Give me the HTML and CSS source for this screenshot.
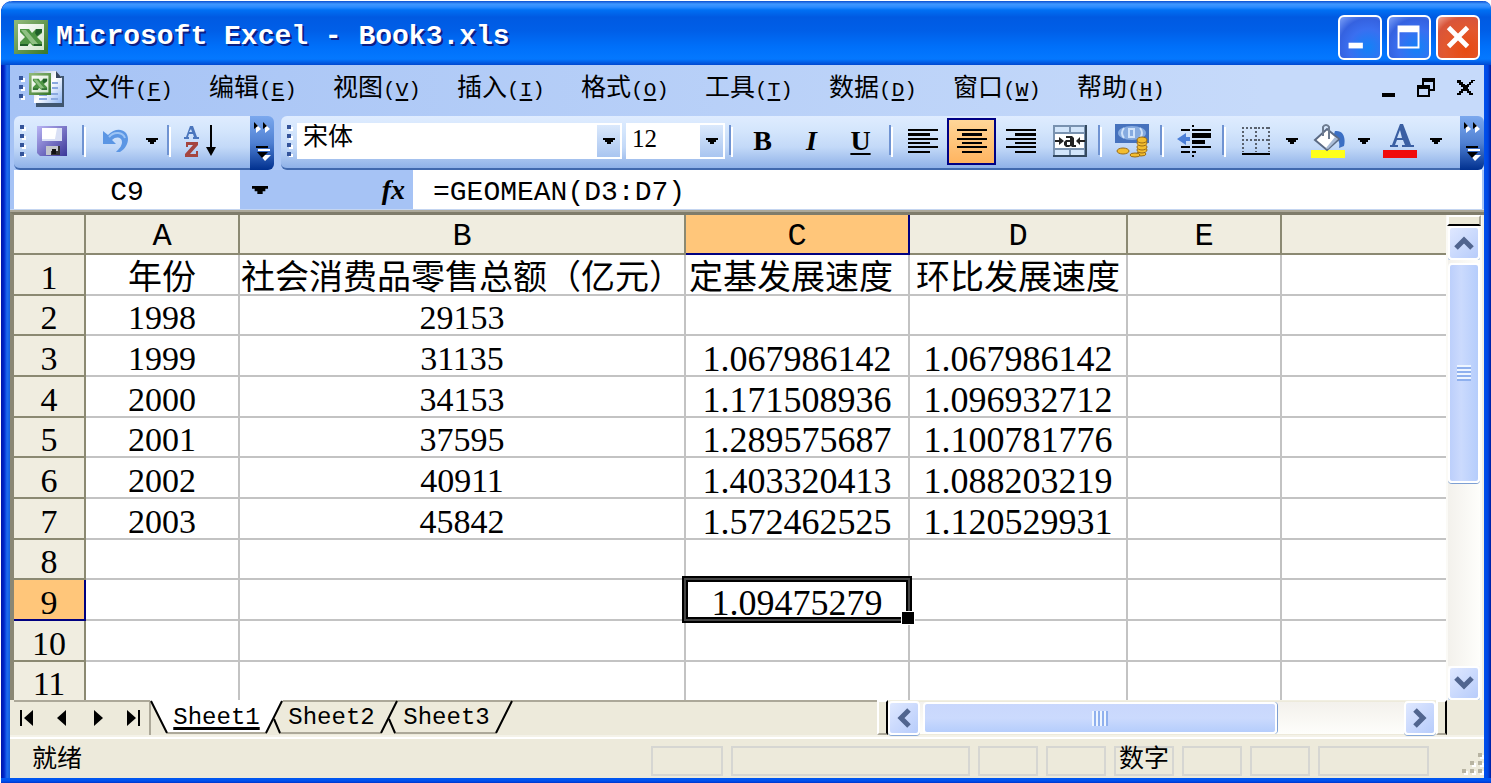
FILE: index.html
```html
<!DOCTYPE html>
<html lang="zh-CN">
<head>
<meta charset="utf-8">
<title>Microsoft Excel - Book3.xls</title>
<link rel="stylesheet" href="styles.css">
</head>
<body>
<svg class="defs" width="0" height="0" aria-hidden="true">
  <defs>
    <linearGradient id="gGreen" x1="0" y1="0" x2="1" y2="1"><stop offset="0" stop-color="#8fb877"/><stop offset="1" stop-color="#3c7a2c"/></linearGradient>
    <linearGradient id="gPaper" x1="0" y1="0" x2="1" y2="1"><stop offset="0" stop-color="#ffffff"/><stop offset="1" stop-color="#cfe3c8"/></linearGradient>
    <linearGradient id="gDoc" x1="0" y1="0" x2="1" y2="1"><stop offset="0" stop-color="#a9bbd8"/><stop offset=".5" stop-color="#ffffff"/><stop offset="1" stop-color="#8db4f2"/></linearGradient>
    <linearGradient id="gDisk" x1="0" y1="0" x2="1" y2="1"><stop offset="0" stop-color="#b9b4f4"/><stop offset="1" stop-color="#3a3698"/></linearGradient>
    <symbol id="xl" viewBox="0 0 34 34">
      <rect x="2" y="2" width="30" height="30" fill="url(#gPaper)" stroke="url(#gGreen)" stroke-width="4"/>
      <path d="M6 9h9l3 4 4-4h6v4l-5 4 5 5v4h-9l-3-3-3 3H6v-4l5-5-5-5z" fill="#4c9342"/>
      <path d="M7 10h5l12 14h-6z" fill="#8fc083"/>
      <path d="M22 9h6v3l-5 4-2-3zM20 24h8v2h-8zM6 24h8v2H6z" fill="#1f5f28"/>
    </symbol>
    <symbol id="down" viewBox="0 0 12 6"><path d="M0 0h12v2h-2v2H8v2H4V4H2V2H0z" fill="#000"/></symbol>
    <symbol id="more" viewBox="0 0 20 46">
      <path d="M4 4v9l5-4zM13 4v9l5-4z" fill="#fff"/><path d="M2 2v7l4-3zM11 2v7l4-3z" fill="#000"/>
      <path d="M6 29h12v2H6zM8 35h11l-6 6z" fill="#fff"/><path d="M4 26h12v2H4zM5 32h11l-6 6z" fill="#000"/>
    </symbol>
  </defs>
</svg>
<main class="window">
  <header class="titlebar">
    <svg class="app-icon" viewBox="0 0 34 34"><use href="#xl"/></svg>
    <h1 class="title">Microsoft Excel - Book3.xls</h1>
    <div class="caption">
      <button class="cap" aria-label="最小化"><svg viewBox="0 0 42 42"><path d="M9 27h15v6H9z" fill="#fff"/></svg></button>
      <button class="cap" aria-label="最大化"><svg viewBox="0 0 42 42"><path d="M9 9h23v24H9zM11 16v15h19V16z" fill="#fff" fill-rule="evenodd"/></svg></button>
      <button class="cap cap-close" aria-label="关闭"><svg viewBox="0 0 42 42"><path d="M11 11l20 20M31 11L11 31" stroke="#fff" stroke-width="5" fill="none"/></svg></button>
    </div>
  </header>

  <nav class="menubar">
    <span class="grip"></span>
    <svg class="doc-icon" viewBox="0 0 36 38">
      <path d="M7 7h28v31H7z" fill="#40566f"/><path d="M5 2h22l6 7v25H5z" fill="url(#gDoc)"/>
      <path d="M27 2v7h6z" fill="#38465e"/><path d="M23 14h6M23 19h6M10 26h8M22 25h7M10 30h8M22 30h7" stroke="#8aa9df" stroke-width="2"/>
      <use href="#xl" x="0" y="4" width="22" height="22"/>
    </svg>
    <button class="menu">文件<span class="key">(<u>F</u>)</span></button>
    <button class="menu">编辑<span class="key">(<u>E</u>)</span></button>
    <button class="menu">视图<span class="key">(<u>V</u>)</span></button>
    <button class="menu">插入<span class="key">(<u>I</u>)</span></button>
    <button class="menu">格式<span class="key">(<u>O</u>)</span></button>
    <button class="menu">工具<span class="key">(<u>T</u>)</span></button>
    <button class="menu">数据<span class="key">(<u>D</u>)</span></button>
    <button class="menu">窗口<span class="key">(<u>W</u>)</span></button>
    <button class="menu">帮助<span class="key">(<u>H</u>)</span></button>
    <div class="doc-controls">
      <button class="plain" aria-label="最小化工作簿"><svg width="20" height="20" viewBox="0 0 20 20"><path d="M7 15h13v4H7z"/></svg></button>
      <button class="plain" aria-label="还原工作簿"><svg width="18" height="20" viewBox="0 0 18 20"><path d="M5 0h13v13h-5v6H0V7h5zM7 4v3h6v4h3V4zM2 11v6h9v-6z" fill-rule="evenodd"/></svg></button>
      <button class="plain" aria-label="关闭工作簿"><svg width="18" height="20" viewBox="0 0 18 20"><path d="M0 2h4v2h2v2h2v1h2V6h2V4h2V2h4v1h-2v2h-2v2h-2v2h-1v2h1v2h2v2h2v2h-4v-2h-2v-2h-2v-1H8v1H6v2H4v2H0v-2h2v-2h2v-2h2V9H4V7H2V5H0z"/></svg></button>
    </div>
  </nav>

  <div class="toolbars">
    <div class="toolbar">
      <div class="tools">
        <span class="grip"></span>
        <button class="tool tool-first" aria-label="保存"><svg width="30" height="30" viewBox="0 0 30 30"><path d="M0 0h30v30H3l-3-3z" fill="url(#gDisk)"/><path d="M5 2h20v13H5z" fill="#fff"/><path d="M20 2h5v13H5v-2h13z" fill="#d9e0f5"/><path d="M9 20h14v9H9z" fill="#333"/><path d="M9 20h12v5H14v4H9z" fill="#c3c6cc"/><path d="M15 23h4v5h-4z" fill="#111"/></svg></button>
        <span class="sep"></span>
        <button class="tool" aria-label="撤销"><svg width="28" height="28" viewBox="0 0 28 28"><path d="M1 4v13h13l-4-4c4-4 10-3 10 2 0 4-3 7-6 10h4c5-3 8-8 8-13C26 2 14-1 6 8z" fill="#5b96e4"/><path d="M7 10c5-6 14-5 16 1" stroke="#9cc4f5" stroke-width="2" fill="none"/></svg></button>
        <button class="drop" aria-label="撤销列表"><svg width="12" height="6"><use href="#down"/></svg></button>
        <span class="sep"></span>
        <button class="tool" aria-label="升序排序"><svg width="34" height="34" viewBox="0 0 34 34"><path d="M6 2h3l4 11h2v2H9v-2h1l-1-3H5l-1 3h1v2H0v-2h2zM7 5L5 8h3z" fill="#4b76bd" fill-rule="evenodd"/><path d="M2 18h12v3L6 30h6v-3h2v6H1v-3l8-9H4v2H2z" fill="#a5453f"/><path d="M26 1h2v22h4l-5 9-5-9h4z"/></svg></button>
      </div>
      <button class="overflow" aria-label="工具栏选项"><svg width="20" height="46"><use href="#more"/></svg></button>
    </div>
    <div class="toolbar toolbar-format">
      <div class="tools">
        <span class="grip"></span>
        <label class="combo combo-font"><select aria-label="字体"><option>宋体</option></select><span class="combo-btn"><svg width="12" height="6"><use href="#down"/></svg></span></label>
        <label class="combo combo-size"><select aria-label="字号"><option>12</option></select><span class="combo-btn"><svg width="12" height="6"><use href="#down"/></svg></span></label>
        <span class="sep"></span>
        <button class="tool glyph glyph-b">B</button>
        <button class="tool glyph glyph-i">I</button>
        <button class="tool glyph glyph-u">U</button>
        <span class="sep"></span>
        <button class="tool" aria-label="左对齐"><svg width="30" height="24" viewBox="0 0 30 24"><path d="M0 0h30v2H0zM0 4h22v3H0zM0 9h30v2H0zM0 13h22v2H0zM0 17h30v2H0zM0 22h22v2H0z"/></svg></button>
        <button class="tool tool-on" aria-label="居中" aria-pressed="true"><svg width="30" height="24" viewBox="0 0 30 24"><path d="M0 0h30v2H0zM5 4h20v3H5zM0 9h30v2H0zM5 13h20v2H5zM0 17h30v2H0zM5 22h20v2H5z"/></svg></button>
        <button class="tool" aria-label="右对齐"><svg width="30" height="24" viewBox="0 0 30 24"><path d="M0 0h30v2H0zM9 4h21v3H9zM0 9h30v2H0zM9 13h21v2H9zM0 17h30v2H0zM9 22h21v2H9z"/></svg></button>
        <button class="tool" aria-label="合并及居中"><svg width="34" height="32" viewBox="0 0 34 32"><path d="M0 0h34v32H0z" fill="#7992b0"/><path d="M32 0h2v32H0v-2h32z" fill="#34495f"/><path d="M2 2h14v5H2zM18 2h13v5H18zM2 25h14v5H2zM18 25h13v5H18z" fill="#d3e6fb"/><path d="M2 9h29v14H2z" fill="#fff"/><path d="M2 15h4v-3l5 4-5 4v-3H2zM32 15h-5v-3l-4 4 4 4v-3h5z" fill="#222"/><path d="M13 11h6l2 2v7h2v2h-4l-1-1-2 1h-3l-2-2v-3l2-2h4v-2h-4zM14 17v3h3v-3z" fill="#222" fill-rule="evenodd"/></svg></button>
        <span class="sep"></span>
        <button class="tool" aria-label="货币样式"><svg width="34" height="34" viewBox="0 0 34 34"><path d="M0 0h34v19H0z" fill="#4672bd"/><ellipse cx="17" cy="9" rx="14" ry="7" fill="#86abe0"/><path d="M9 4q-4 5 0 10M14 4v10M14 5h5v8h-5M25 4q4 5 0 10" stroke="#cfe2fa" stroke-width="2" fill="none"/><g fill="#f3bd2f" stroke="#9b6c16"><ellipse cx="26" cy="30" rx="5" ry="2"/><ellipse cx="27" cy="26" rx="5" ry="3"/><ellipse cx="27" cy="23" rx="5" ry="3"/><ellipse cx="27" cy="19" rx="5" ry="3"/><ellipse cx="27" cy="16" rx="5" ry="3"/><ellipse cx="8" cy="27" rx="6" ry="3"/><ellipse cx="20" cy="31" rx="5" ry="2"/></g></svg></button>
        <span class="sep"></span>
        <button class="tool" aria-label="减少缩进量"><svg width="34" height="32" viewBox="0 0 34 32"><path d="M4 4h9v2H4zM15 4h19v2H15zM15 8h19v5H15zM15 15h13v4H15zM4 21h9v2H4zM15 21h19v2H15zM4 26h9v2H4zM15 26h4v2h-4zM15 0h2v2h-2zM15 30h2v2h-2z"/><path d="M0 14l9-6v4h4v4H9v4z" fill="#4b7fd8"/></svg></button>
        <span class="sep"></span>
        <button class="tool" aria-label="边框"><svg width="28" height="28" viewBox="0 0 28 28"><path d="M0 1h28M0 13h28M1 0v25M14 0v25M27 0v25" stroke="#59616d" stroke-width="2" stroke-dasharray="2 2"/><path d="M0 26h28v2H0z"/></svg></button>
        <button class="drop" aria-label="边框列表"><svg width="12" height="6"><use href="#down"/></svg></button>
        <button class="tool" aria-label="填充颜色"><svg width="34" height="34" viewBox="0 0 34 34"><path d="M0 26h34v8H0z" fill="#ffff1a"/><path d="M24 7c8-1 11 6 9 15l-5 2c1-6 0-9-6-11z" fill="#3b6fc4"/><path d="M16 5l12 10-12 11L4 16z" fill="#fff" stroke="#5b6a84" stroke-width="2"/><path d="M17 25l10-10-3-2-9 11z" fill="#a9bbd6"/><path d="M12 12V3q1-2 3-2t3 2v12" fill="none" stroke="#6d7b90" stroke-width="2"/></svg></button>
        <button class="drop" aria-label="填充颜色列表"><svg width="12" height="6"><use href="#down"/></svg></button>
        <button class="tool" aria-label="字体颜色"><svg width="34" height="34" viewBox="0 0 34 34"><path d="M0 26h34v8H0z" fill="#f00a0a"/><path d="M17 0h3l8 21h3v2H19v-2h3l-2-5h-6l-2 5h3v2H7v-2h2zM17 6l-3 8h5z" fill="#3a5fa3" fill-rule="evenodd"/></svg></button>
        <button class="drop" aria-label="字体颜色列表"><svg width="12" height="6"><use href="#down"/></svg></button>
      </div>
      <button class="overflow" aria-label="工具栏选项"><svg width="20" height="46"><use href="#more"/></svg></button>
    </div>
  </div>

  <div class="formula-bar">
    <input class="name-box" aria-label="名称框" value="C9">
    <button class="name-drop" aria-label="名称列表"><svg width="16" height="8"><use href="#down"/></svg></button>
    <button class="fx" aria-label="插入函数">fx</button>
    <input class="formula" aria-label="编辑栏" value="=GEOMEAN(D3:D7)">
  </div>

  <section class="sheet">
    <div class="grid-view">
      <table class="grid">
        <colgroup><col class="w-row"><col class="w-a"><col class="w-b"><col class="w-c"><col class="w-d"><col class="w-e"><col></colgroup>
        <thead><tr><th></th><th>A</th><th>B</th><th class="on-col">C</th><th>D</th><th>E</th><th></th></tr></thead>
        <tbody>
          <tr><th>1</th><td>年份</td><td>社会消费品零售总额（亿元）</td><td class="start">定基发展速度</td><td>环比发展速度</td><td></td><td></td></tr>
          <tr><th>2</th><td>1998</td><td>29153</td><td></td><td></td><td></td><td></td></tr>
          <tr><th>3</th><td>1999</td><td>31135</td><td class="rate">1.067986142</td><td class="rate">1.067986142</td><td></td><td></td></tr>
          <tr><th>4</th><td>2000</td><td>34153</td><td class="rate">1.171508936</td><td class="rate">1.096932712</td><td></td><td></td></tr>
          <tr><th>5</th><td>2001</td><td>37595</td><td class="rate">1.289575687</td><td class="rate">1.100781776</td><td></td><td></td></tr>
          <tr><th>6</th><td>2002</td><td>40911</td><td class="rate">1.403320413</td><td class="rate">1.088203219</td><td></td><td></td></tr>
          <tr><th>7</th><td>2003</td><td>45842</td><td class="rate">1.572462525</td><td class="rate">1.120529931</td><td></td><td></td></tr>
          <tr><th>8</th><td></td><td></td><td></td><td></td><td></td><td></td></tr>
          <tr><th class="on-row">9</th><td></td><td></td><td class="rate active">1.09475279<span class="cursor"></span></td><td></td><td></td><td></td></tr>
          <tr><th>10</th><td></td><td></td><td></td><td></td><td></td><td></td></tr>
          <tr class="last"><th>11</th><td></td><td></td><td></td><td></td><td></td><td></td></tr>
        </tbody>
      </table>
      <div class="vscroll">
        <span class="split-h"></span>
        <button class="sbtn" aria-label="向上滚动"><svg width="20" height="14" viewBox="0 0 20 14"><path d="M2 12l8-8 8 8" class="chev"/></svg></button>
        <div class="vtrack"><span class="thumb vthumb"><span class="ridges-v"></span></span></div>
        <button class="sbtn" aria-label="向下滚动"><svg width="20" height="14" viewBox="0 0 20 14"><path d="M2 2l8 8 8-8" class="chev"/></svg></button>
      </div>
    </div>
    <div class="bottom">
      <div class="tab-nav">
        <button class="plain" aria-label="第一张"><svg width="14" height="16"><path d="M0 0h2v16H0zM13 0v16L4 8z"/></svg></button>
        <button class="plain" aria-label="上一张"><svg width="14" height="16"><path d="M11 0v16L2 8z"/></svg></button>
        <button class="plain" aria-label="下一张"><svg width="14" height="16"><path d="M3 0v16l9-8z"/></svg></button>
        <button class="plain" aria-label="最后一张"><svg width="14" height="16"><path d="M12 0h2v16h-2zM1 0v16l9-8z"/></svg></button>
      </div>
      <div class="tabs">
        <button class="tab tab-on"><svg class="tab-shape" viewBox="0 0 133 34"><path d="M0 0h133l-16 33H17z" fill="#fff"/><path d="M17 33h100" stroke="#aca899" stroke-width="2"/><path d="M1 1l16 32M132 1l-16 32" stroke="#000" stroke-width="2" fill="none"/></svg><span>Sheet1</span></button>
        <button class="tab"><svg class="tab-shape" viewBox="0 0 133 34"><path d="M14 33h102" stroke="#aca899" stroke-width="2"/><path d="M9 19l6 14M132 1l-16 32" stroke="#000" stroke-width="2" fill="none"/></svg><span>Sheet2</span></button>
        <button class="tab"><svg class="tab-shape" viewBox="0 0 133 34"><path d="M14 33h102" stroke="#aca899" stroke-width="2"/><path d="M9 19l6 14M132 1l-16 32" stroke="#000" stroke-width="2" fill="none"/></svg><span>Sheet3</span></button>
      </div>
      <span class="split-v"></span>
      <div class="hscroll">
        <button class="sbtn" aria-label="向左滚动"><svg width="14" height="20" viewBox="0 0 14 20"><path d="M12 2l-8 8 8 8" class="chev"/></svg></button>
        <div class="htrack"><span class="thumb hthumb"><span class="ridges-h"></span></span></div>
        <button class="sbtn" aria-label="向右滚动"><svg width="14" height="20" viewBox="0 0 14 20"><path d="M2 2l8 8-8 8" class="chev"/></svg></button>
      </div>
      <span class="split-v"></span>
      <span class="corner"></span>
    </div>
  </section>

  <footer class="status">
    <span class="ready">就绪</span>
    <span class="pane pane-m"></span>
    <span class="pane pane-xl"></span>
    <span class="pane"></span>
    <span class="pane"></span>
    <span class="pane">数字</span>
    <span class="pane"></span>
    <span class="pane"></span>
    <span class="pane pane-l"></span>
    <svg class="resize" width="24" height="24" viewBox="0 0 24 24"><path d="M20 4h4v4h-4zM12 12h4v4h-4zM20 12h4v4h-4zM4 20h4v4H4zM12 20h4v4h-4zM20 20h4v4h-4z" fill="#fff"/><path d="M18 2h4v4h-4zM10 10h4v4h-4zM18 10h4v4h-4zM2 18h4v4H2zM10 18h4v4h-4zM18 18h4v4h-4z" fill="#b8b4a2"/></svg>
  </footer>
</main>
</body>
</html>
```

FILE: styles.css
```css
* { box-sizing: border-box; }

body {
  margin: 0;
  background: #fff;
  color: #000;
  font-family: "Liberation Mono", "Noto Sans CJK SC", monospace;
}

button, input, select { font: inherit; color: inherit; border: 0; padding: 0; margin: 0; background: none; border-radius: 0; }
svg { display: block; flex: none; }
.defs { position: absolute; }

.window {
  display: flex;
  flex-direction: column;
  min-height: 100vh;
  padding: 0 7px 7px 9px;
  border-left: 1px solid #fff;
  border-top: 1px solid #fff;
  border-radius: 12px 8px 0 0;
  background:
    linear-gradient(#0058f0, #0050ee 3px, #001aa8) bottom / 100% 7px no-repeat,
    linear-gradient(90deg, #0015a8, #0028cc 3px, #1f6cf0 6px, #1660dc 9px) left / 9px 100% no-repeat,
    linear-gradient(90deg, #0050ee, #0046e0 4px, #001ca0) right / 7px 100% no-repeat;
}

/* title bar */
.titlebar {
  display: flex;
  align-items: center;
  gap: 8px;
  height: 64px;
  margin: 0 -7px 0 -9px;
  padding: 8px 11px 0 13px;
  border-radius: 12px 8px 0 0;
  background: linear-gradient(#0b4fd0 0, #3f97ff 3px, #2d8cff 6px, #0070f4 9px, #005ae2 16px, #005fe8 30px, #0070fa 46px, #0478ff 58px, #0048d0 64px);
}
.app-icon { width: 34px; height: 34px; }
.title { flex: 1; margin: 0; font-size: 28px; line-height: 34px; font-weight: bold; color: #fff; text-shadow: 2px 2px 0 #0b1f86; }
.caption { display: flex; gap: 5px; }
.cap {
  width: 44px;
  height: 45px;
  border: 2px solid #fff;
  border-radius: 6px;
  background: radial-gradient(circle at 70% 75%, #1282f8, #3a6ff0 45%, #3562e0 70%, #7ea2f8 100%);
}
.cap-close { background: radial-gradient(circle at 70% 80%, #e84a10, #e2582f 50%, #d8553a 75%, #f0a898 100%); }

/* menu bar */
.menubar {
  display: flex;
  align-items: center;
  height: 50px;
  padding: 0 9px 4px 9px;
  background: linear-gradient(90deg, #a6c3f5, #c6dafa 85%);
}
.grip {
  flex: none;
  width: 6px;
  height: 32px;
  background:
    repeating-linear-gradient(#34549a 0 4px, transparent 4px 9px) 0 0 / 4px 100% no-repeat,
    repeating-linear-gradient(transparent 0 2px, #fff 2px 6px, transparent 6px 9px) 2px 0 / 4px 100% no-repeat;
}
.menubar .grip { height: 24px; }
.doc-icon { width: 36px; height: 38px; margin: 0 20px 0 4px; }
.menu { width: 124px; padding-top: 4px; text-align: left; white-space: nowrap; font-size: 25px; line-height: 36px; }
.key { font-size: 21px; }
.key u { text-underline-offset: 3px; text-decoration-thickness: 2px; }
.doc-controls { display: flex; gap: 22px; margin-left: auto; }
.plain { display: block; }

/* tool bars */
.toolbars { display: flex; gap: 7px; padding: 1px 0 0 4px; background: linear-gradient(90deg, #a6c3f5, #c6dafa 85%); }
.toolbar { display: flex; width: 260px; height: 54px; }
.toolbar-format { flex: 1; width: auto; }
.tools {
  display: flex;
  flex: 1;
  align-items: center;
  min-width: 0;
  padding: 0 0 2px 6px;
  border-bottom: 2px solid #4169ae;
  border-radius: 6px 0 0 6px;
  background: linear-gradient(#dfecff, #d3e5fc 30%, #c3d9f8 60%, #8fb1e8);
}
.overflow {
  display: grid;
  place-items: center;
  width: 24px;
  border-radius: 0 6px 6px 0;
  background: linear-gradient(#7ba8ee, #4f80d2 50%, #00308f);
}
.tool { display: flex; flex: none; align-items: center; justify-content: center; width: 49px; height: 47px; }
.tool-first { width: 52px; }
.tool-on { border: 2px solid #000084; background: linear-gradient(#ffd698, #ffb460); }
.drop { display: grid; flex: none; place-items: center; width: 23px; height: 47px; }
.sep { flex: none; width: 13px; height: 32px; background: linear-gradient(#6f93d2, #6f93d2) 4px 0 / 2px 30px no-repeat, linear-gradient(#fff, #fff) 6px 2px / 2px 30px no-repeat; }
.combo { position: relative; flex: none; height: 36px; background: #fff; }
.combo-font { width: 325px; margin: 0 4px; }
.combo-size { width: 99px; }
.combo select { appearance: none; width: 100%; height: 36px; padding: 0 30px 4px 6px; font-size: 25px; line-height: 30px; outline: 0; }
.combo-size select { font-family: "Liberation Serif", serif; }
.combo-btn {
  position: absolute;
  top: 2px;
  right: 2px;
  bottom: 2px;
  display: grid;
  place-items: center;
  width: 23px;
  background: linear-gradient(#dbe9fc, #a9c5f0);
  pointer-events: none;
}
.glyph { font: bold 28px/34px "Liberation Serif", serif; }
.glyph-i { font-style: italic; }
.glyph-u { text-decoration: underline; text-decoration-thickness: 2px; text-underline-offset: 3px; }

/* formula bar */
.formula-bar { display: flex; height: 40px; padding: 0 2px 0 4px; background: #a6c3f5; border-bottom: 1px solid #c4d5f0; }
.name-box { width: 226px; background: #fff; font-size: 28px; text-align: center; padding-top: 6px; }
.name-drop { display: grid; place-items: center; width: 40px; }
.fx { flex: none; width: 133px; padding-right: 8px; text-align: right; font: italic bold 28px/32px "Liberation Serif", serif; }
.formula { flex: 1; min-width: 0; padding: 6px 20px 0; background: #fff; font-size: 28px; }

/* worksheet */
.sheet { display: flex; flex: 1; flex-direction: column; border-top: 2px solid #aca899; background: #f1efe2; }
.grid-view { display: flex; border-left: 4px solid #8a8774; border-top: 3px solid #7f7c6b; padding-right: 2px; }
.grid { flex: 1; width: 0; table-layout: fixed; border-collapse: separate; border-spacing: 0; background: #fff; font-family: "Liberation Serif", "Noto Sans CJK SC", serif; font-size: 34px; line-height: 32px; }
.grid tr { height: 41px; }
.grid thead tr, .grid tbody tr:nth-child(3n+2) { height: 40px; }
.grid th, .grid td { padding: 6px 0 0; text-align: center; white-space: nowrap; font-weight: 400; border-right: 2px solid #c3c3c3; border-bottom: 2px solid #c3c3c3; }
.grid th { background: #f0ede0; border-color: #8b8972; }
.grid thead th { font-family: "Liberation Mono", monospace; font-size: 32px; }
.grid tr > :last-child { border-right: 0; }
.grid .on-col, .grid .on-row { background: #ffc67a; border-color: #000080; }
.grid td.start { text-align: left; padding-left: 3px; }
.grid .rate { font-size: 36px; }
.grid .active { position: relative; }
.grid tbody tr.last { height: 38px; }
.grid .last th, .grid .last td { border-bottom: 0; }
.w-row { width: 72px; }
.w-a, .w-e { width: 154px; }
.w-b { width: 446px; }
.w-c { width: 224px; }
.w-d { width: 218px; }
.cursor { position: absolute; inset: -2px; border: 2px solid #444; box-shadow: 0 0 0 2px #000, inset 0 0 0 2px #000; }
.cursor::after { content: ""; position: absolute; right: -7px; bottom: -6px; width: 12px; height: 12px; background: #000; border: 1px solid #fff; }

/* scroll bars */
.vscroll { display: flex; flex-direction: column; align-items: center; width: 36px; background: #fbfaf6; }
.split-h { width: 34px; height: 11px; border: 2px solid #fff; border-right-color: #aca899; border-bottom: 2px solid #000; background: #ece9d8; }
.sbtn { display: grid; flex: none; place-items: center; width: 32px; height: 34px; border: 2px solid #fff; border-radius: 4px; background: linear-gradient(135deg, #dfe8ff, #b7ccfb); box-shadow: 0 1px 0 #88a9d8; }
.chev { fill: none; stroke: #51658f; stroke-width: 5; }
.vtrack { flex: 1; width: 32px; padding-top: 3px; background: linear-gradient(90deg, #f3f1ec, #fefefb); }
.htrack { flex: 1; padding-left: 3px; background: linear-gradient(#f3f1ec, #fefefb); }
.thumb { display: grid; place-items: center; border: 2px solid #fff; border-radius: 4px; background: linear-gradient(90deg, #bccffb, #cbdafd 40%, #b5cdfc); }
.vthumb { height: 220px; box-shadow: 0 1px 0 #7d9fd2; }
.hthumb { width: 354px; height: 32px; background: linear-gradient(#c9d7fc, #cbdafd 50%, #b5cdfc); box-shadow: 1px 0 0 #7d9fd2; }
.ridges-v { width: 14px; height: 16px; background: repeating-linear-gradient(#eef5ff 0 2px, #8fb0ee 2px 4px); }
.ridges-h { width: 16px; height: 15px; background: repeating-linear-gradient(90deg, #eef5ff 0 2px, #8fb0ee 2px 4px); }

/* sheet tabs */
.bottom { display: flex; flex: 1; min-height: 34px; padding-left: 4px; background: #edeadb; border-bottom: 2px solid #f4f2e8; }
.tab-nav { display: flex; align-items: center; justify-content: space-between; width: 137px; padding: 0 9px 2px 6px; border-top: 2px solid #aca899; border-right: 2px solid #aca899; }
.tabs { display: flex; flex: 1; padding-left: 8px; background: linear-gradient(#aca899, #aca899) 130px 0 / 100% 2px no-repeat; }
.tab { position: relative; width: 115px; font-size: 24px; line-height: 30px; }
.tab span { position: relative; }
.tab-on { z-index: 1; }
.tab-on span { text-decoration: underline; text-decoration-thickness: 3px; text-underline-offset: 3px; }
.tab-shape { position: absolute; top: 0; left: -9px; width: 133px; height: 34px; }
.split-v { width: 11px; border: 2px solid #fff; border-bottom-color: #aca899; border-right-color: #000; background: #ece9d8; }
.hscroll { display: flex; align-items: center; width: 548px; border-top: 1px solid #f1efe2; }
.corner { width: 37px; }

/* status bar */
.status { display: flex; align-items: center; gap: 8px; height: 41px; padding: 4px 0 0 22px; border-top: 2px solid #fff; background: #edeadb; font-size: 25px; line-height: 28px; }
.ready { flex: 1; }
.pane { display: flex; align-items: center; justify-content: center; width: 60px; height: 30px; border: 2px solid #d6d6d2; white-space: nowrap; }
.pane-m { width: 72px; }
.pane-l { width: 111px; }
.pane-xl { width: 239px; }
.resize { margin: 4px 0 0 23px; }
```
